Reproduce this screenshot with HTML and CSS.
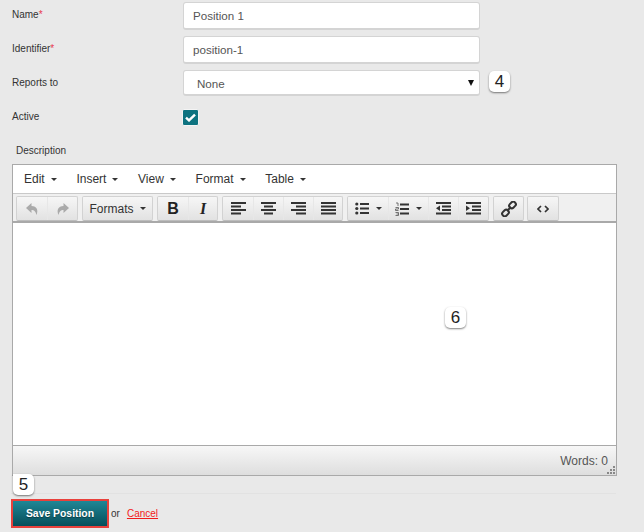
FILE: index.html
```html
<!DOCTYPE html>
<html lang="en">
<head>
<meta charset="utf-8">
<title>Position</title>
<link rel="stylesheet" href="styles.css">
</head>
<body>
<form class="form">
  <div class="row row-input">
    <label class="label">Name<span class="req">*</span></label>
    <div class="field">Position 1</div>
  </div>
  <div class="row row-input">
    <label class="label">Identifier<span class="req">*</span></label>
    <div class="field">position-1</div>
  </div>
  <div class="row row-select">
    <label class="label">Reports to</label>
    <div class="field select"><span class="select-text">None</span><span class="select-arrow"></span></div>
    <span class="badge badge-inline">4</span>
  </div>
  <div class="row row-check">
    <label class="label">Active</label>
    <span class="check">
      <svg width="11" height="9" viewBox="0 0 11 9"><path d="M1 4.600 L4 7.400 L10 1.600" fill="none" stroke="#fff" stroke-width="2.400"/></svg>
    </span>
  </div>
  <div class="desc-label">Description</div>
  <div class="editor">
    <div class="menubar">
      <span class="menu">Edit<i class="caret"></i></span>
      <span class="menu">Insert<i class="caret"></i></span>
      <span class="menu">View<i class="caret"></i></span>
      <span class="menu">Format<i class="caret"></i></span>
      <span class="menu">Table<i class="caret"></i></span>
    </div>
    <div class="toolbar">
      <div class="group">
        <span class="btn w30 off"><svg width="14" height="14" viewBox="0 0 14 14"><path d="M6.500 1 L1 6 L6.500 11 V8 C9 8 10.500 9 11.500 13 C13.500 8 12 4.300 6.500 4 Z" fill="#aaa"/></svg></span>
        <span class="btn w30 off"><svg width="14" height="14" viewBox="0 0 14 14"><path d="M7.500 1 L13 6 L7.500 11 V8 C5 8 3.500 9 2.500 13 C.5 8 2 4.300 7.500 4 Z" fill="#aaa"/></svg></span>
      </div>
      <div class="group">
        <span class="btn formats">Formats<i class="caret"></i></span>
      </div>
      <div class="group">
        <span class="btn w30 glyph bold">B</span>
        <span class="btn w29 glyph italic">I</span>
      </div>
      <div class="group">
        <span class="btn w30"><svg width="15" height="13" viewBox="0 0 15 13"><path d="M0 1h15M0 4.500h10M0 8h15M0 11.500h10" stroke="#333" stroke-width="2"/></svg></span>
        <span class="btn w30"><svg width="15" height="13" viewBox="0 0 15 13"><path d="M0 1h15M3 4.500h9M0 8h15M3 11.500h9" stroke="#333" stroke-width="2"/></svg></span>
        <span class="btn w30"><svg width="15" height="13" viewBox="0 0 15 13"><path d="M0 1h15M5 4.500h10M0 8h15M5 11.500h10" stroke="#333" stroke-width="2"/></svg></span>
        <span class="btn w29"><svg width="15" height="13" viewBox="0 0 15 13"><path d="M0 1h15M0 4.500h15M0 8h15M0 11.500h15" stroke="#333" stroke-width="2"/></svg></span>
      </div>
      <div class="group">
        <span class="btn w40"><svg width="14" height="13" viewBox="0 0 14 13"><path d="M5 2h9M5 6.500h9M5 11h9" stroke="#333" stroke-width="2"/><circle cx="1.800" cy="2" r="1.600" fill="#333"/><circle cx="1.800" cy="6.500" r="1.600" fill="#333"/><circle cx="1.800" cy="11" r="1.600" fill="#333"/></svg><i class="caret small"></i></span>
        <span class="btn w40"><svg width="14" height="14" viewBox="0 0 14 14"><path d="M5 2.500h9M5 7h9M5 11.500h9" stroke="#333" stroke-width="2"/><path d="M1 1h2v3M.5 5.500h3v1.500h-3v1.500h3M.5 10.500h3v3h-3M1.500 12h2" fill="none" stroke="#555" stroke-width=".8"/></svg><i class="caret small"></i></span>
        <span class="btn w30"><svg width="15" height="13" viewBox="0 0 15 13"><path d="M0 1h15M6 4.500h9M6 8h9M0 11.500h15" stroke="#333" stroke-width="2"/><path d="M4 3.500V9L0 6.250Z" fill="#333"/></svg></span>
        <span class="btn w30"><svg width="15" height="13" viewBox="0 0 15 13"><path d="M0 1h15M6 4.500h9M6 8h9M0 11.500h15" stroke="#333" stroke-width="2"/><path d="M0 3.500V9L4 6.250Z" fill="#333"/></svg></span>
      </div>
      <div class="group">
        <span class="btn w29"><svg width="16" height="16" viewBox="0 0 16 16"><g fill="none" stroke="#333" stroke-width="2"><rect x="8" y="1.500" width="7" height="5" rx="2.200" transform="rotate(-45 11.500 4)"/><rect x="1" y="9.500" width="7" height="5" rx="2.200" transform="rotate(-45 4.500 12)"/><path d="M6 10 L10 6"/></g></svg></span>
      </div>
      <div class="group group-tight">
        <span class="btn w30"><svg width="12" height="8" viewBox="0 0 12 8"><path d="M4 1 L1 4 L4 7 M8 1 L11 4 L8 7" fill="none" stroke="#333" stroke-width="1.700"/></svg></span>
      </div>
    </div>
    <div class="edit-area">
      <span class="badge badge-six">6</span>
    </div>
    <div class="statusbar">
      <span>Words: 0</span>
      <svg class="grip" width="8" height="8" viewBox="0 0 8 8"><path d="M6 0h2v2H6zM3 3h2v2H3zM6 3h2v2H6zM0 6h2v2H0zM3 6h2v2H3zM6 6h2v2H6z" fill="#888"/></svg>
    </div>
  </div>
  <span class="badge badge-five">5</span>
  <div class="actions">
    <span class="save">Save Position</span>
    <span class="or">or</span>
    <a class="cancel" href="#">Cancel</a>
  </div>
</form>
</body>
</html>
```
FILE: styles.css
```css
* { box-sizing: border-box; }
html, body { margin: 0; height: 532px; overflow: hidden; }
body { background: #e9e9e9; font-family: "Liberation Sans", Arial, sans-serif; color: #333; }
.form { position: relative; padding: 2px 27px 0 12px; }
.row { display: flex; align-items: flex-start; }
.row-input { height: 34px; }
.row-select { height: 34px; }
.row-check { height: 34px; }
.label { width: 171px; font-size: 10px; line-height: 12px; padding-top: 7px; color: #333; }
.req { color: #e8384f; }
.field {
  width: 297px; height: 28px; background: #fff; border: 1px solid #d4d4d4; border-bottom-width: 2px;
  border-radius: 3px; padding-left: 9px; font-size: 11.600px; line-height: 25px; color: #555;
}
.select { height: 26px; padding: 0 5px 0 13px; display: flex; justify-content: space-between; align-items: center; }
.select-text { margin-top: 2px; }
.select-arrow { width: 0; height: 0; border-left: 3px solid transparent; border-right: 3px solid transparent; border-top: 6px solid #111; }
.check {
  width: 17px; height: 17px; margin: 5px 0 0 -1px; background: #0e7380; border: 1px solid #f4f4f4; border-radius: 2px;
  display: flex; align-items: center; justify-content: center;
}
.desc-label { font-size: 10px; line-height: 12px; margin: -1px 0 0 4px; height: 27px; padding-top: 8px; color: #333; }
.badge {
  display: flex; align-items: center; justify-content: center; width: 21px; height: 21px; background: #fff;
  border-radius: 5px; box-shadow: 0 1px 2px rgba(0,0,0,.5); font-size: 17px; color: #222;
}
.badge-inline { margin: 1px 0 0 9px; }
.badge-six { position: absolute; left: 432px; top: 142px; }
.badge-five { position: absolute; left: 13px; top: 474px; border-radius: 0 5px 5px 5px; }
.editor { width: 605px; height: 312px; border: 1px solid #a9a9a9; background: #fff; position: relative; }
.menubar { height: 29px; background: #fff; display: flex; align-items: center; padding-left: 11px; gap: 19.700px; font-size: 12px; color: #333; border-bottom: 1px solid #c9c9c9; }
.menu { display: flex; align-items: center; }
.caret { display: inline-block; width: 0; height: 0; margin-left: 6px; border-left: 3px solid transparent; border-right: 3px solid transparent; border-top: 3px solid #333; }
.caret.small { margin-left: 7px; }
.toolbar { height: 29px; background: #f0f0f0; border-bottom: 2px solid #a9a9a9; display: flex; padding: 2px 0 0 3px; gap: 4px; }
.group { height: 25px; display: flex; border: 1px solid #d2d2d2; border-bottom-color: #bdbdbd; border-radius: 2px; background: linear-gradient(#f6f6f6, #e2e2e2); }
.group-tight { margin-left: -1px; }
.btn { display: flex; align-items: center; justify-content: center; height: 100%; font-size: 12px; color: #333; }
.btn + .btn { border-left: 1px solid #e7e7e7; }
.w29 { width: 29px; }
.w30 { width: 30px; }
.w40 { width: 40px; }
.formats { width: 69px; }
.glyph { font-size: 16px; font-weight: bold; font-family: "Liberation Serif", serif; color: #222; }
.bold { font-family: "Liberation Sans", sans-serif; }
.italic { font-style: italic; }
.edit-area { height: 222px; background: #fff; }
.statusbar { height: 30px; border-top: 1px solid #a9a9a9; background: linear-gradient(#f7f7f7, #dedede); display: flex; justify-content: flex-end; align-items: center; padding-right: 8px; font-size: 12px; color: #555; position: relative; }
.grip { position: absolute; right: 1px; bottom: 1px; }
.actions { display: flex; align-items: center; margin-top: 17px; padding-top: 5px; border-top: 1px solid #e2e2e2; width: 605px; margin-left: -1px; }
.save {
  width: 98px; height: 29px; border: 2px solid #e8413c; background: linear-gradient(#1f8796, #074e5a);
  color: #fff; font-weight: bold; font-size: 10.400px; display: flex; align-items: center; justify-content: center;
  text-shadow: 0 1px 1px rgba(0,0,0,.4);
}
.or { font-size: 10px; margin-left: 2px; color: #333; }
.cancel { font-size: 10px; margin-left: 7px; color: #f21b1b; }
```
